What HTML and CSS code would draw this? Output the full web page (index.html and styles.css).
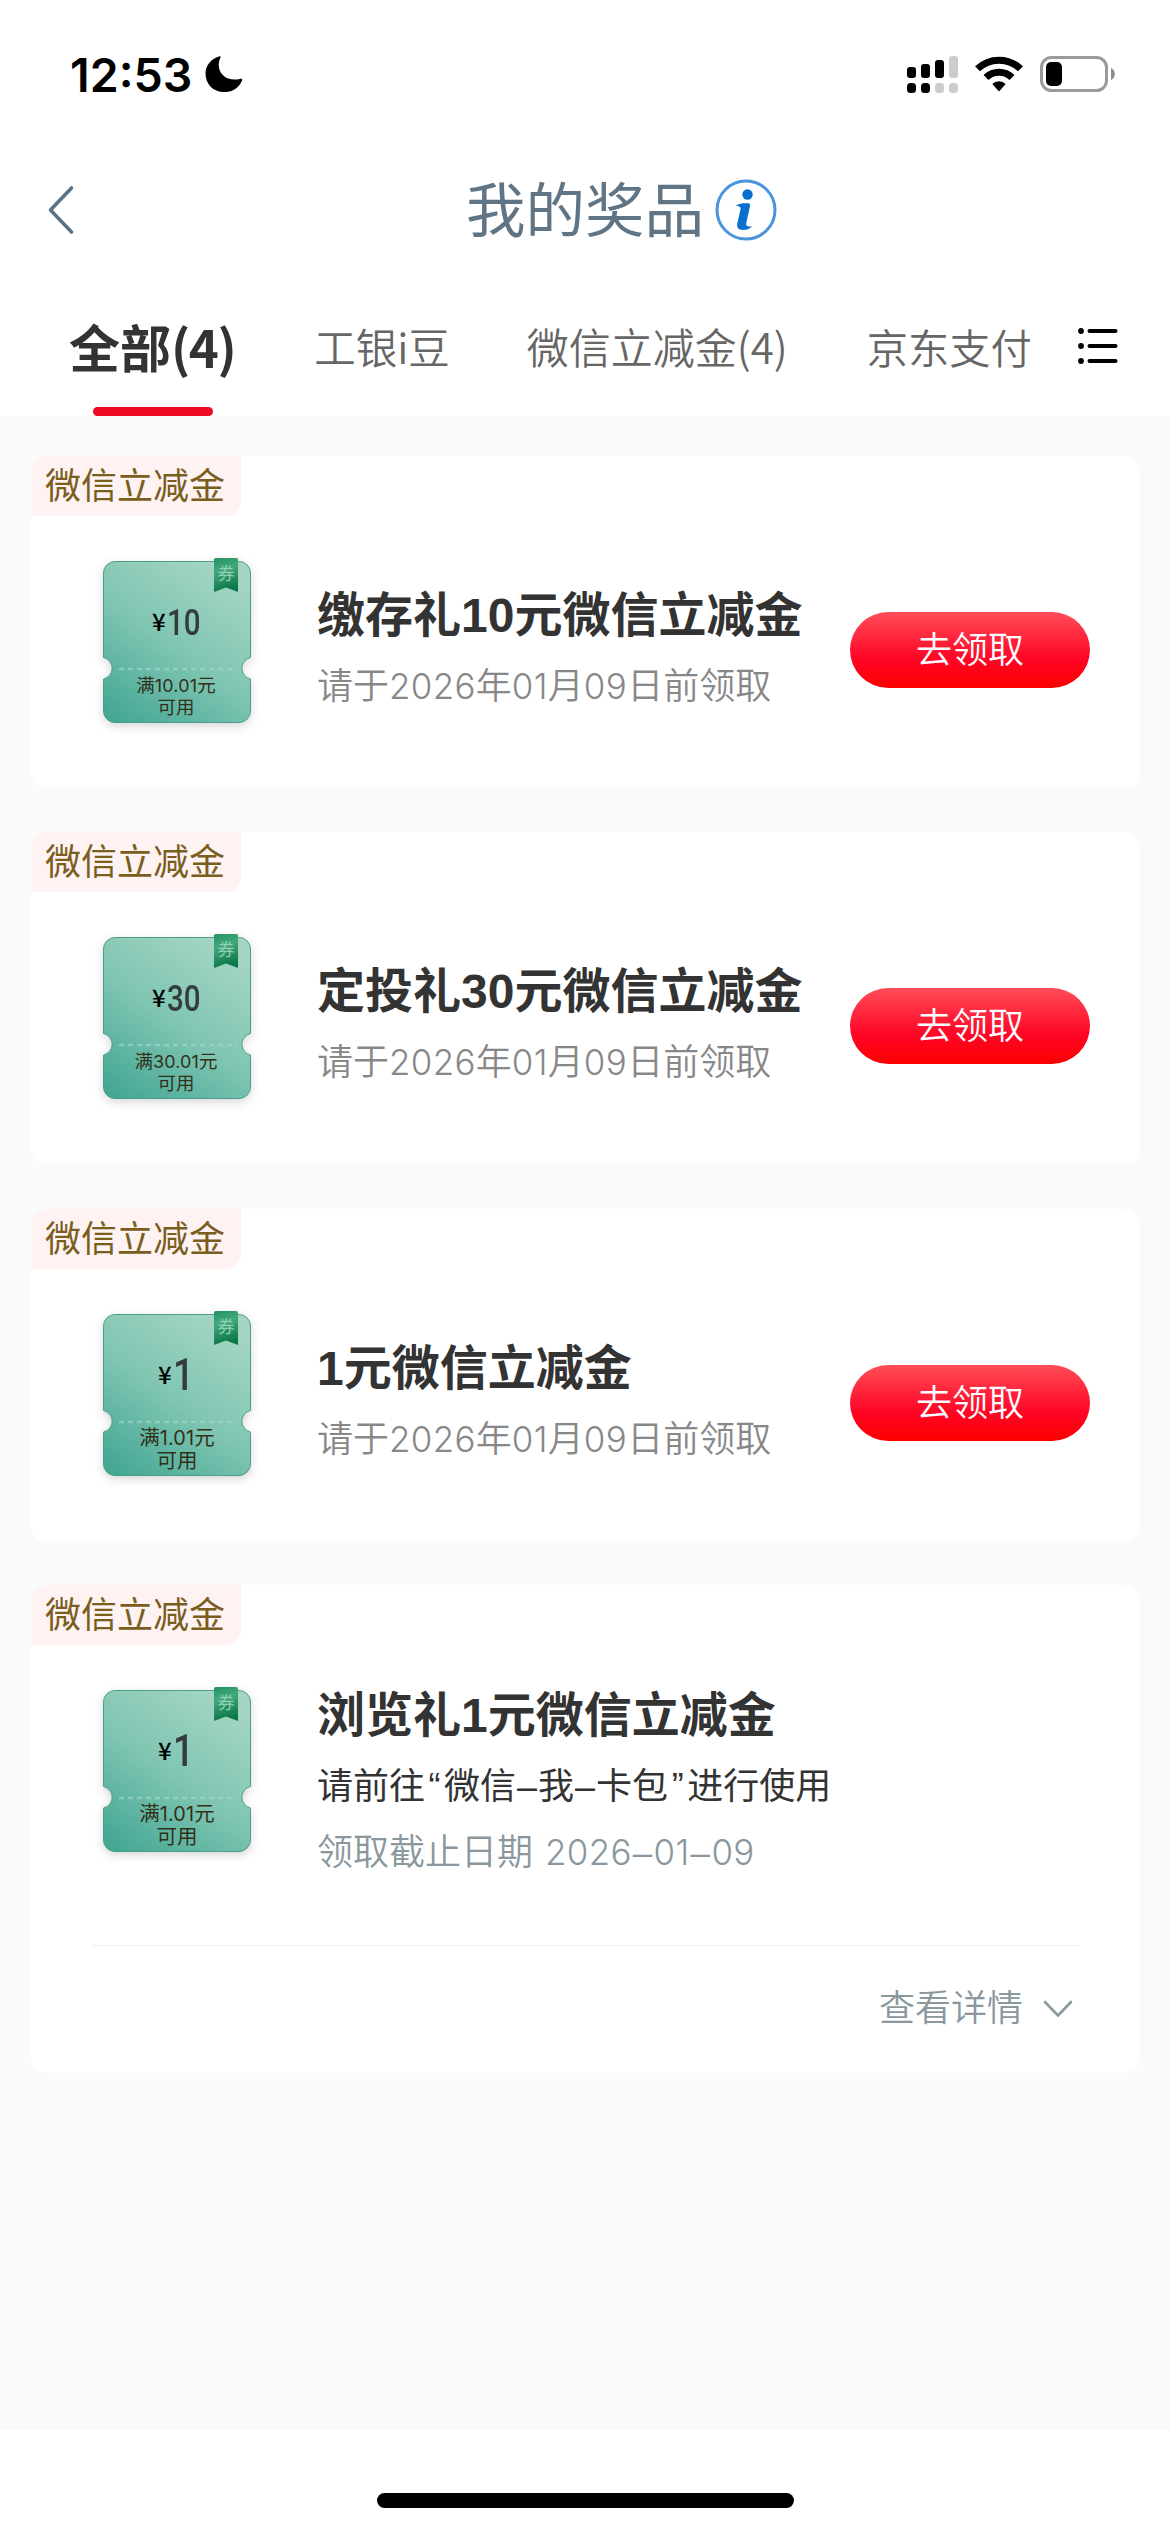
FILE: index.html
```html
<!DOCTYPE html>
<html lang="zh-CN">
<head>
<meta charset="utf-8">
<title>我的奖品</title>
<link rel="stylesheet" href="styles.css">
</head>
<body>
<svg class="defs" width="0" height="0" aria-hidden="true">
  <defs>
    <linearGradient id="ticket-fill" x1="0.1" y1="1" x2="0.75" y2="0">
      <stop offset="0" stop-color="#43a794"/>
      <stop offset="0.5" stop-color="#7fc5b2"/>
      <stop offset="1" stop-color="#a4d5c4"/>
    </linearGradient>
    <linearGradient id="ribbon-fill" x1="0" y1="0" x2="0.2" y2="1">
      <stop offset="0" stop-color="#23935f"/>
      <stop offset="0.4" stop-color="#43a87d"/>
      <stop offset="1" stop-color="#0c7748"/>
    </linearGradient>
    <symbol id="ticket" viewBox="0 0 148 165">
      <path d="M12 3.500H136A11.500 11.500 0 0 1 147.500 15V99.500A11 11 0 0 0 147.500 121V153A11.500 11.500 0 0 1 136 164.500H12A11.500 11.500 0 0 1 .5 153V121A11 11 0 0 0 .5 99.500V15A11.500 11.500 0 0 1 12 3.500Z" fill="url(#ticket-fill)" stroke="#4b9f88" stroke-width="1"/>
      <path d="M16 111H134" stroke="#a5d8ca" stroke-opacity=".65" stroke-width="2.500" stroke-dasharray="5 4"/>
      <path d="M111 1.500Q111 0 113 0H133Q135 0 135 1.500V34L123 29.500L111 34Z" fill="url(#ribbon-fill)"/>
    </symbol>
  </defs>
</svg>
<div class="screen">
  <div class="status-bar">
    <div class="clock">
      <span class="time">12:53</span>
      <svg class="moon" width="38" height="36" viewBox="0 0 38 36"><path d="M14 .5C15.500-.2 16 .6 15.300 2 10 14 19 26 34 23.200 36.500 22.500 37.800 22.800 37 24.500A18 17.800 0 0 1 19 36C8 36 .5 28 .5 17.500.5 9.500 6 3 14 .5Z" fill="#000"/></svg>
    </div>
    <div class="indicators">
      <svg width="52" height="38" viewBox="0 0 52 38">
        <g fill="#000"><rect x="0" y="11" width="9" height="11" rx="3"/><rect x="14" y="8" width="9" height="14" rx="3"/><rect x="28" y="4" width="9" height="18" rx="3"/><rect x="0" y="27" width="9" height="10" rx="3.500"/><rect x="14" y="27" width="9" height="10" rx="3.500"/></g>
        <g fill="#ccc"><rect x="42" y="0" width="9" height="22" rx="3"/><rect x="28" y="27" width="9" height="10" rx="3.500"/><rect x="42" y="27" width="9" height="10" rx="3.500"/></g>
      </svg>
      <svg width="48" height="38" viewBox="0 0 48 38">
        <g fill="none" stroke="#000" stroke-width="7"><path d="M2.500 12.800A31 31 0 0 1 45.500 12.800"/><path d="M11 21.500A18.500 18.500 0 0 1 37 21.500"/></g>
        <path d="M17.300 28A9.800 9.800 0 0 1 30.700 28L24 35.500Z" fill="#000"/>
      </svg>
      <svg class="battery" width="76" height="38" viewBox="0 0 76 38">
        <rect x="1.500" y="1.500" width="65" height="33" rx="10" fill="none" stroke="#9a9a9a" stroke-width="3"/>
        <rect x="6" y="6" width="16" height="24" rx="5"/>
        <path d="M71 12C76 14 76 22 71 24Z" fill="#8c8c8c"/>
      </svg>
    </div>
  </div>

  <header class="nav">
    <svg class="back" width="28" height="50" viewBox="0 0 28 50"><path d="M24.500 3L3.500 25L24.500 47" fill="none" stroke="#5b7285" stroke-width="3.600" stroke-linecap="round" stroke-linejoin="round"/></svg>
    <h1 class="nav-title">我的奖品</h1>
    <svg class="info" width="62" height="62" viewBox="0 0 62 62">
      <circle cx="31" cy="31" r="29" fill="none" stroke="#4a94dd" stroke-width="3"/>
      <circle cx="32.500" cy="15.500" r="5.200" fill="#0a6fd0"/>
      <path d="M20.500 26.500C25 24 29.500 24 33.500 24.300C35.500 24.600 35.200 26 34.800 28L31.300 44C30.800 47.300 33 48.200 37 47C35 50.500 29 51.800 25 50.500C22 49.500 21.800 46.500 22.500 43.500L25.500 30.500C26 27.500 24 27.200 20.500 26.500Z" fill="#0a6fd0"/>
    </svg>
  </header>

  <nav class="tabs">
    <div class="tab tab-active">全部<span class="count">(4)</span></div>
    <div class="tab">工银i豆</div>
    <div class="tab tab-wechat">微信立减金(4)</div>
    <div class="tab tab-last">京东支付</div>
    <svg class="menu" width="40" height="36" viewBox="0 0 40 36">
      <g stroke="#000" stroke-width="4" stroke-linecap="round"><path d="M11.500 3H37.500M11.500 18H37.500M11.500 33H37.500"/></g>
      <circle cx="3" cy="3" r="2.900"/><circle cx="3" cy="18" r="2.900"/><circle cx="3" cy="33" r="2.900"/>
    </svg>
  </nav>

  <main class="list">
    <section class="card">
      <div class="tag">微信立减金</div>
      <div class="card-body">
        <div class="ticket">
          <svg class="ticket-bg" width="148" height="165"><use href="#ticket"/></svg>
          <span class="ribbon-text">券</span>
          <div class="amount"><span class="yen">¥</span><span class="value">10</span></div>
          <div class="rule">满<span class="num">10.01</span>元<br>可用</div>
        </div>
        <div class="info-col">
          <h2 class="title">缴存礼<span class="tnum">10</span>元微信立减金</h2>
          <p class="sub">请于<span class="num">2026</span>年<span class="num">01</span>月<span class="num">09</span>日前领取</p>
        </div>
        <button class="claim">去领取</button>
      </div>
    </section>

    <section class="card">
      <div class="tag">微信立减金</div>
      <div class="card-body">
        <div class="ticket">
          <svg class="ticket-bg" width="148" height="165"><use href="#ticket"/></svg>
          <span class="ribbon-text">券</span>
          <div class="amount"><span class="yen">¥</span><span class="value">30</span></div>
          <div class="rule">满<span class="num">30.01</span>元<br>可用</div>
        </div>
        <div class="info-col">
          <h2 class="title">定投礼<span class="tnum">30</span>元微信立减金</h2>
          <p class="sub">请于<span class="num">2026</span>年<span class="num">01</span>月<span class="num">09</span>日前领取</p>
        </div>
        <button class="claim">去领取</button>
      </div>
    </section>

    <section class="card">
      <div class="tag">微信立减金</div>
      <div class="card-body">
        <div class="ticket ticket-single">
          <svg class="ticket-bg" width="148" height="165"><use href="#ticket"/></svg>
          <span class="ribbon-text">券</span>
          <div class="amount"><span class="yen">¥</span><span class="value">1</span></div>
          <div class="rule">满<span class="num">1.01</span>元<br>可用</div>
        </div>
        <div class="info-col">
          <h2 class="title"><span class="tnum">1</span>元微信立减金</h2>
          <p class="sub">请于<span class="num">2026</span>年<span class="num">01</span>月<span class="num">09</span>日前领取</p>
        </div>
        <button class="claim">去领取</button>
      </div>
    </section>

    <section class="card card-claimed">
      <div class="tag">微信立减金</div>
      <div class="card-body">
        <div class="ticket ticket-single">
          <svg class="ticket-bg" width="148" height="165"><use href="#ticket"/></svg>
          <span class="ribbon-text">券</span>
          <div class="amount"><span class="yen">¥</span><span class="value">1</span></div>
          <div class="rule">满<span class="num">1.01</span>元<br>可用</div>
        </div>
        <div class="info-col">
          <h2 class="title">浏览礼<span class="tnum">1</span>元微信立减金</h2>
          <p class="guide">请前往<span class="quote">“</span>微信<span class="dash">–</span>我<span class="dash">–</span>卡包<span class="quote">”</span>进行使用</p>
          <p class="deadline">领取截止日期 <span class="num">2026<span class="dash">–</span>01<span class="dash">–</span>09</span></p>
        </div>
      </div>
      <div class="card-foot">
        <span>查看详情</span>
        <svg width="30" height="18" viewBox="0 0 30 18"><path d="M2 2L15 15.500L28 2" fill="none" stroke="#8c9a9f" stroke-width="2.600" stroke-linecap="round" stroke-linejoin="round"/></svg>
      </div>
    </section>
  </main>

  <footer class="home-area"><div class="home-bar"></div></footer>
</div>
</body>
</html>
```
FILE: styles.css
```css
* {
  box-sizing: border-box;
  margin: 0;
  padding: 0;
}

body {
  background: #fff;
  font-family: "Noto Sans CJK SC", sans-serif;
  color: #333;
}

.defs {
  position: absolute;
}

svg {
  display: block;
  flex: none;
}

.screen {
  width: 1170px;
  height: 2532px;
  display: flex;
  flex-direction: column;
  overflow: hidden;
}

/* status bar */
.status-bar {
  height: 150px;
  padding: 0 54px 0 70px;
  display: flex;
  justify-content: space-between;
  align-items: center;
}

.clock {
  display: flex;
  align-items: center;
  gap: 13px;
}

.time {
  font: 600 46.500px/56px Inter, sans-serif;
  color: #000;
}

.moon {
  margin-top: -2px;
}

.indicators {
  display: flex;
  gap: 16px;
}

.battery {
  margin-left: 1px;
}

/* title bar */
.nav {
  height: 120px;
  padding-left: 47px;
  display: flex;
  align-items: center;
}

.nav-title {
  margin-left: 391px;
  font-size: 59.5px;
  line-height: 60px;
  font-weight: 400;
  color: #5f7485;
  padding-bottom: 8px;
  white-space: nowrap;
}

.info {
  margin-left: 11px;
}

/* tabs */
.tabs {
  height: 146px;
  padding-left: 69px;
  display: flex;
  align-items: flex-start;
}

.tab {
  position: relative;
  height: 146px;
  line-height: 152px;
  margin-right: 76px;
  font-size: 41.500px;
  font-weight: 350;
  color: #666;
  white-space: nowrap;
}

.tab-wechat {
  margin-right: 79px;
  padding-left: 1px;
  font-size: 42px;
}

.tab-active {
  margin-right: 79px;
  font-size: 51px;
  font-weight: 700;
  color: #333;
}

.tab-last {
  font-size: 41.300px;
}

.count {
  letter-spacing: -1.500px;
}

.tab-active::after {
  content: "";
  position: absolute;
  left: 24px;
  bottom: 0;
  width: 120px;
  height: 9px;
  border-radius: 5px;
  background: #ee0a24;
}

.menu {
  margin: 58px 0 0 -30px;
}

/* prize list */
.list {
  flex: 1;
  padding: 40px 30px 0 31px;
  display: flex;
  flex-direction: column;
  gap: 44.300px;
  background: #fafafa;
}

.card {
  flex: none;
  height: 332px;
  border-radius: 15px;
  background: #fff;
  overflow: hidden;
}

.card-claimed {
  height: 488px;
}

.tag {
  width: 210px;
  height: 60px;
  padding-left: 14px;
  border-radius: 15px 0 15px 0;
  background: #fef2f2;
  font-size: 36px;
  line-height: 54px;
  color: #7a5e1e;
}

.card-body {
  height: 228px;
  padding: 42px 50px 0 72px;
  display: flex;
  align-items: flex-start;
}

.ticket {
  position: relative;
  flex: none;
  width: 148px;
  height: 165px;
  padding-top: 46px;
  text-align: center;
}

.ticket-bg {
  position: absolute;
  left: 0;
  top: 0;
  filter: drop-shadow(0 3px 5px rgba(0, 0, 0, .16));
}

.ribbon-text {
  position: absolute;
  left: 111px;
  top: 6px;
  width: 24px;
  font-size: 17px;
  line-height: 18px;
  color: #8fd0b5;
}

.amount,
.rule {
  position: relative;
}

.amount {
  height: 42px;
  padding-left: 48px;
  display: flex;
  line-height: 36px;
}

.yen {
  width: 15.500px;
  font: 500 24px/33px "Noto Sans CJK SC", sans-serif;
  color: #000;
}

.value {
  font: 500 36px/38px Roboto, sans-serif;
  color: #333b3d;
  transform: scaleX(.82);
  transform-origin: 0 50%;
}

.ticket-single .amount {
  padding-left: 54px;
}

.ticket-single .value {
  font-size: 45px;
  line-height: 36px;
}

.rule {
  margin-top: 27px;
  padding-right: 2px;
  font-size: 18.500px;
  line-height: 22px;
  color: #33301a;
}

.ticket-single .rule {
  margin-top: 26px;
  padding-right: 0;
  font-size: 20.500px;
  line-height: 23px;
}

.info-col {
  flex: 1;
  margin-left: 66px;
  padding-top: 29px;
  white-space: nowrap;
}

.title {
  font-size: 48px;
  line-height: 48px;
  font-weight: 700;
  color: #333;
}

.tnum {
  font-family: "Liberation Sans", sans-serif;
  line-height: 0;
}

.num {
  font-family: Inter, sans-serif;
  font-size: .97em;
  line-height: 0;
  letter-spacing: .01em;
}

.sub {
  margin-top: 30px;
  font-size: 36px;
  line-height: 36px;
  font-weight: 350;
  color: #888;
}

.sub .num,
.deadline .num {
  font-weight: 300;
}

.claim {
  flex: none;
  width: 240px;
  height: 76px;
  margin-top: 54px;
  padding-bottom: 5px;
  border: 0;
  border-radius: 38px;
  background: linear-gradient(#ff4d58, #ff0526 62%, #fb0000);
  font: 350 36px/71px "Noto Sans CJK SC", sans-serif;
  color: #fff;
}

.card-claimed .card-body {
  height: 300px;
}

.card-claimed .info-col {
  padding-top: 0;
}

.guide {
  margin-top: 30px;
  font-size: 36px;
  line-height: 36px;
}

.quote {
  display: inline-block;
  width: 19px;
  font-family: "Liberation Sans", sans-serif;
  text-align: center;
  line-height: 0;
}

.dash {
  font-family: "Liberation Sans", sans-serif;
  margin: 0 1px;
  line-height: 0;
}

.deadline {
  margin-top: 30px;
  font-size: 36px;
  line-height: 36px;
  font-weight: 350;
  color: #8a979e;
  word-spacing: 4px;
}

.card-foot {
  height: 127px;
  margin: 0 61px;
  padding: 0 6px 8px 0;
  border-top: 1px solid #eee;
  display: flex;
  justify-content: flex-end;
  align-items: center;
  gap: 20px;
  font-size: 36px;
  font-weight: 350;
  color: #8a979e;
}

.card-foot svg {
  margin-top: 8px;
}

/* home indicator */
.home-area {
  height: 102px;
  padding-top: 63px;
}

.home-bar {
  width: 417px;
  height: 15px;
  margin: 0 auto;
  border-radius: 8px;
  background: #000;
}
```
